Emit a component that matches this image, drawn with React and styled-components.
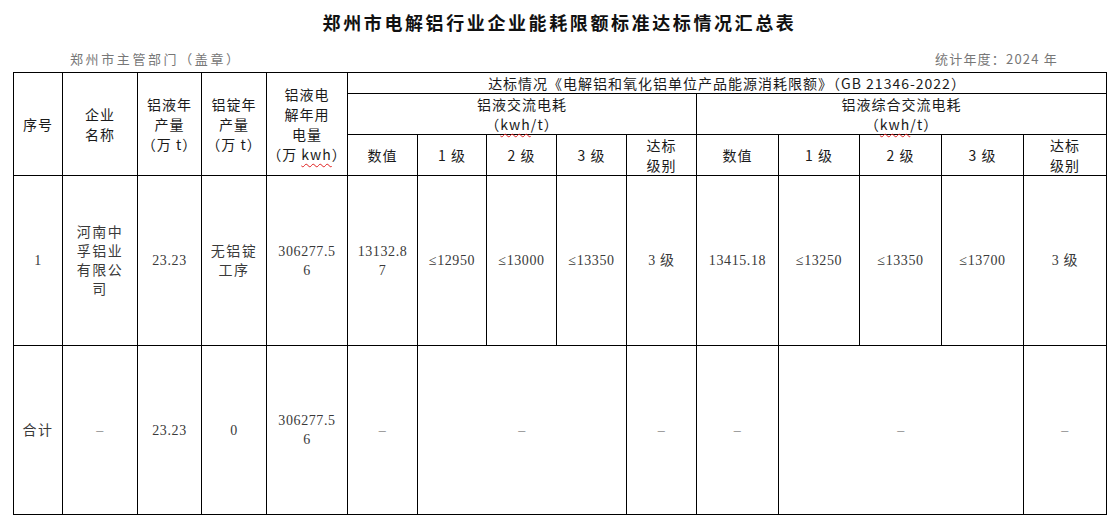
import React from 'react';
import styled, { createGlobalStyle } from 'styled-components';

const GlobalStyle = createGlobalStyle`
  body {
    margin: 0;
    background: #fff;
  }
`;

const Page = styled.div`
  width: 1118px;
  height: 524px;
  padding: 10px 12px 0 13px;
  box-sizing: border-box;
  font-family: "Noto Sans CJK SC", sans-serif;
`;

const Title = styled.h1`
  margin: 0;
  text-align: center;
  font-size: 18px;
  line-height: 24px;
  letter-spacing: 2.6px;
  font-weight: 700;
  color: #111;
`;

const MetaRow = styled.div`
  display: flex;
  justify-content: space-between;
  margin-top: 16px;
  height: 22px;
  padding: 0 48px 0 57px;
  font-size: 13px;
  line-height: 18px;
  color: #777;
`;

const MetaText = styled.span`
  letter-spacing: ${p => p.$spacing}px;
`;

const Table = styled.table`
  border-collapse: collapse;
  table-layout: fixed;
  width: 1093px;
`;

const Row = styled.tr`
  height: ${p => p.$h}px;
`;

const Th = styled.td`
  border: 1px solid #000;
  padding: 0;
  text-align: center;
  vertical-align: middle;
  font-size: 14px;
  line-height: 20px;
  letter-spacing: 1px;
  color: #1a1a1a;
  font-family: "Noto Sans CJK SC", sans-serif;
  white-space: nowrap;
`;

const Td = styled.td`
  border: 1px solid #000;
  padding: 0;
  text-align: center;
  vertical-align: middle;
  font-family: "Liberation Serif", "Noto Sans CJK SC", serif;
  font-size: 14px;
  line-height: 19px;
  letter-spacing: ${p => (p.$cjk ? '1.5px' : '0.6px')};
  color: ${p => (p.$dash ? '#888' : '#3a3a3a')};
  white-space: nowrap;
`;

const Wavy = styled.span`
  text-decoration: underline wavy #e02020;
  text-decoration-thickness: 1px;
  text-underline-offset: 3px;
`;

const widths = [49, 75, 64, 65, 81, 70, 69, 70, 70, 70, 82, 81, 82, 82, 83];

const gradeHeads = ['数值', '1 级', '2 级', '3 级'];

const Lines = ({ items }) =>
  items.map((t, i) => (
    <React.Fragment key={i}>
      {i > 0 && <br />}
      {t}
    </React.Fragment>
  ));

const App = () => (
  <Page>
    <GlobalStyle />
    <Title>郑州市电解铝行业企业能耗限额标准达标情况汇总表</Title>
    <MetaRow>
      <MetaText $spacing={2.6}>郑州市主管部门（盖章）</MetaText>
      <MetaText $spacing={1.2}>统计年度：2024 年</MetaText>
    </MetaRow>
    <Table>
      <colgroup>
        {widths.map((w, i) => (
          <col key={i} style={{ width: w }} />
        ))}
      </colgroup>
      <tbody>
        <Row $h={19}>
          <Th rowSpan={3}>序号</Th>
          <Th rowSpan={3}>
            <Lines items={['企业', '名称']} />
          </Th>
          <Th rowSpan={3}>
            <Lines items={['铝液年', '产量', '（万 t）']} />
          </Th>
          <Th rowSpan={3}>
            <Lines items={['铝锭年', '产量', '（万 t）']} />
          </Th>
          <Th rowSpan={3}>
            铝液电
            <br />
            解年用
            <br />
            电量
            <br />
            （万 <Wavy>kwh</Wavy>）
          </Th>
          <Th colSpan={10}>达标情况《电解铝和氧化铝单位产品能源消耗限额》（GB 21346-2022）</Th>
        </Row>
        <Row $h={40}>
          <Th colSpan={5}>
            铝液交流电耗
            <br />
            （<Wavy>kwh</Wavy>/t）
          </Th>
          <Th colSpan={5}>
            铝液综合交流电耗
            <br />
            （<Wavy>kwh</Wavy>/t）
          </Th>
        </Row>
        <Row $h={39}>
          {gradeHeads.map(h => (
            <Th key={'a' + h}>{h}</Th>
          ))}
          <Th>
            <Lines items={['达标', '级别']} />
          </Th>
          {gradeHeads.map(h => (
            <Th key={'b' + h}>{h}</Th>
          ))}
          <Th>
            <Lines items={['达标', '级别']} />
          </Th>
        </Row>
        <Row $h={170}>
          <Td>1</Td>
          <Td $cjk>
            <Lines items={['河南中', '孚铝业', '有限公', '司']} />
          </Td>
          <Td>23.23</Td>
          <Td $cjk>
            <Lines items={['无铝锭', '工序']} />
          </Td>
          <Td>
            <Lines items={['306277.5', '6']} />
          </Td>
          <Td>
            <Lines items={['13132.8', '7']} />
          </Td>
          <Td>≤12950</Td>
          <Td>≤13000</Td>
          <Td>≤13350</Td>
          <Td>3 级</Td>
          <Td>13415.18</Td>
          <Td>≤13250</Td>
          <Td>≤13350</Td>
          <Td>≤13700</Td>
          <Td>3 级</Td>
        </Row>
        <Row $h={169}>
          <Td $cjk>合计</Td>
          <Td $dash>–</Td>
          <Td>23.23</Td>
          <Td>0</Td>
          <Td>
            <Lines items={['306277.5', '6']} />
          </Td>
          <Td $dash>–</Td>
          <Td $dash colSpan={3}>–</Td>
          <Td $dash>–</Td>
          <Td $dash>–</Td>
          <Td $dash colSpan={3}>–</Td>
          <Td $dash>–</Td>
        </Row>
      </tbody>
    </Table>
  </Page>
);

export default App;
